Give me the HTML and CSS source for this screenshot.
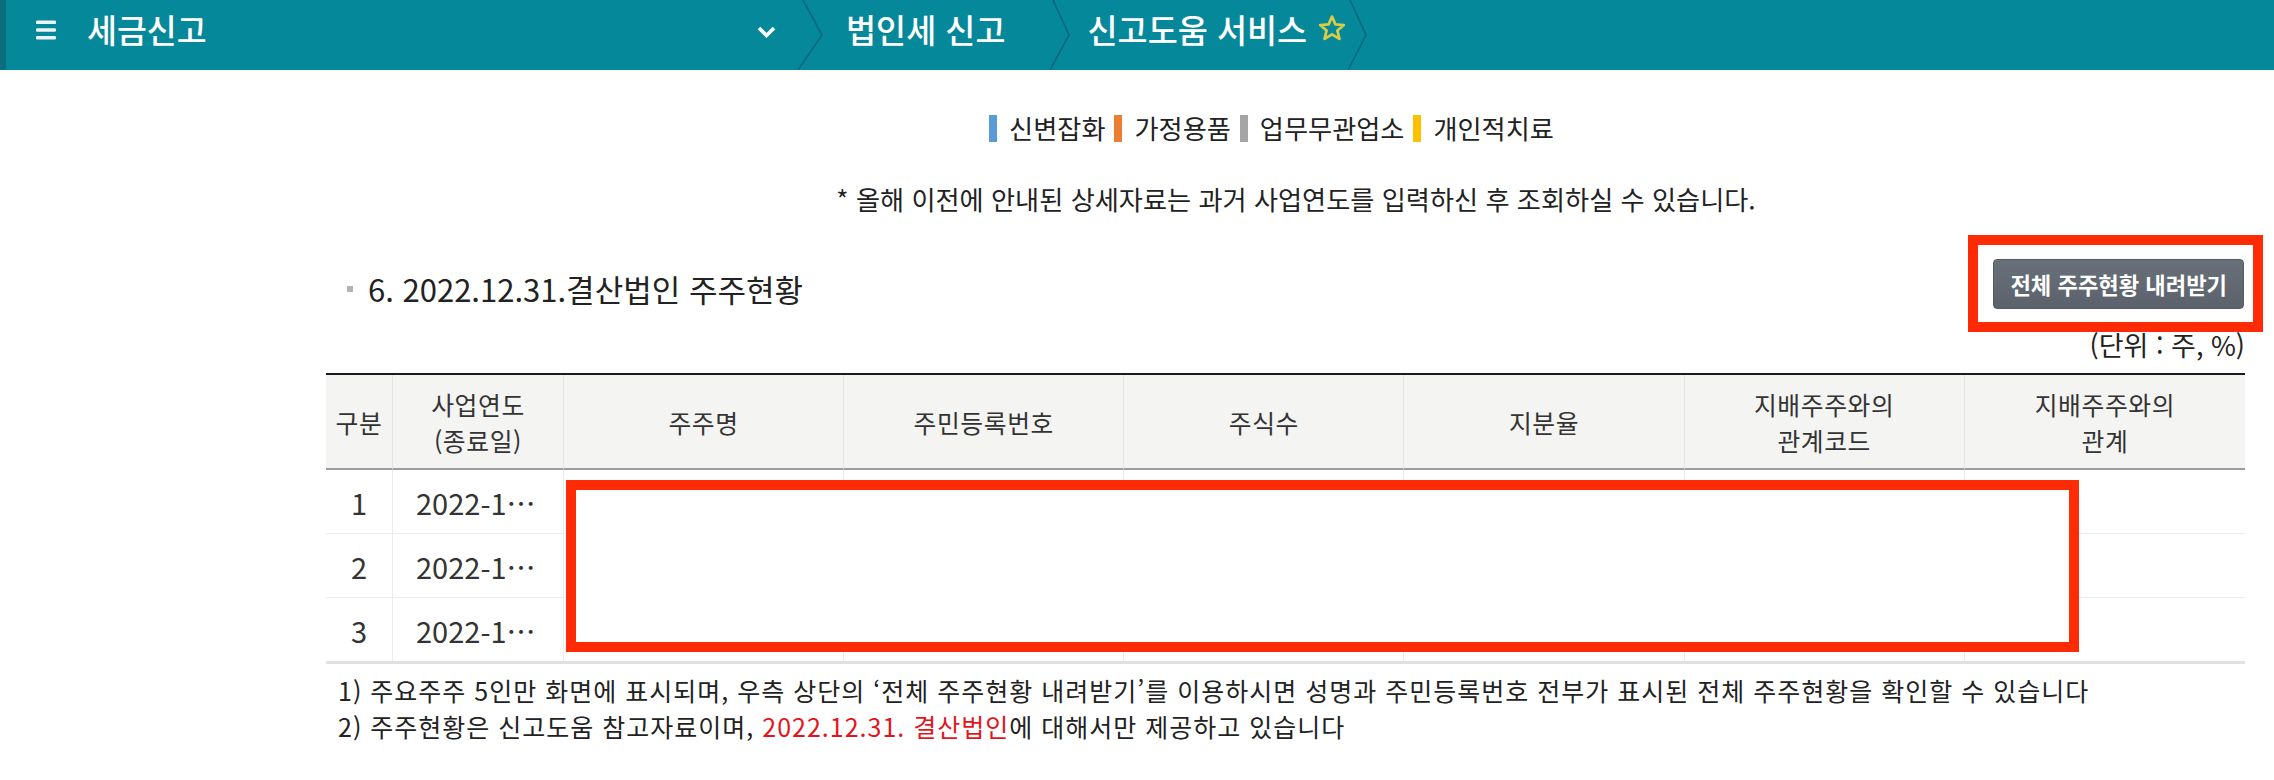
FILE: index.html
```html
<!DOCTYPE html>
<html lang="ko">
<head>
<meta charset="utf-8">
<title>세금신고 - 신고도움 서비스</title>
<link rel="stylesheet" href="styles.css">
</head>
<body>
<header class="gnb">
  <div class="brand">
    <svg class="menu-icon" width="20" height="20" viewBox="0 0 20 20" aria-hidden="true">
      <rect x="0" y="0.5" width="20" height="3.6" rx="1.2"/>
      <rect x="0" y="8.2" width="20" height="3.6" rx="1.2"/>
      <rect x="0" y="15.9" width="20" height="3.6" rx="1.2"/>
    </svg>
    <span class="brand-title">세금신고</span>
  </div>
  <svg class="caret" width="19" height="12" viewBox="0 0 19 12" aria-hidden="true">
    <polyline points="2,2 9.5,9.5 17,2" fill="none" stroke="#fff" stroke-width="3.6"/>
  </svg>
  <svg class="sep sep-first" width="26" height="70" viewBox="0 0 26 70" aria-hidden="true">
    <polyline points="5,0 24,35 0,70" fill="none" stroke="#05697a" stroke-width="1.6"/>
  </svg>
  <span class="crumb">법인세 신고</span>
  <svg class="sep sep-second" width="26" height="70" viewBox="0 0 26 70" aria-hidden="true">
    <polyline points="3,0 19,35 0,70" fill="none" stroke="#05697a" stroke-width="1.6"/>
  </svg>
  <span class="crumb crumb-current">신고도움 서비스</span>
  <svg class="star" width="28" height="28" viewBox="0 0 24 24" aria-hidden="true">
    <polygon points="12,2.2 14.9,8.9 22.2,9.4 16.6,14.1 18.4,21.3 12,17.4 5.6,21.3 7.4,14.1 1.8,9.4 9.1,8.9" fill="none" stroke="#d6cd45" stroke-width="2.3" stroke-linejoin="round"/>
  </svg>
  <svg class="sep sep-last" width="26" height="70" viewBox="0 0 26 70" aria-hidden="true">
    <polyline points="2,0 18,35 0,70" fill="none" stroke="#05697a" stroke-width="1.6"/>
  </svg>
</header>

<main class="content">
  <ul class="legend">
    <li class="legend-item"><span class="legend-bar bar-blue"></span>신변잡화</li>
    <li class="legend-item"><span class="legend-bar bar-orange"></span>가정용품</li>
    <li class="legend-item"><span class="legend-bar bar-gray"></span>업무무관업소</li>
    <li class="legend-item"><span class="legend-bar bar-yellow"></span>개인적치료</li>
  </ul>

  <p class="notice">* 올해 이전에 안내된 상세자료는 과거 사업연도를 입력하신 후 조회하실 수 있습니다.</p>

  <div class="section-head">
    <h2 class="section-title"><span class="title-bullet"></span>6. 2022.12.31.결산법인 주주현황</h2>
    <div class="btn-wrap">
      <button class="btn-download" type="button">전체 주주현황 내려받기</button>
      <span class="annot annot-btn"></span>
    </div>
  </div>

  <p class="unit">(단위 : 주, %)</p>

  <div class="table-wrap">
    <table class="grid">
      <colgroup>
        <col class="c-no">
        <col class="c-year">
        <col><col><col><col><col><col>
      </colgroup>
      <thead>
        <tr>
          <th>구분</th>
          <th>사업연도<br>(종료일)</th>
          <th>주주명</th>
          <th>주민등록번호</th>
          <th>주식수</th>
          <th>지분율</th>
          <th>지배주주와의<br>관계코드</th>
          <th class="last">지배주주와의<br>관계</th>
        </tr>
      </thead>
      <tbody>
        <tr>
          <td>1</td><td class="year" title="2022-12-31">2022-1…</td><td></td><td></td><td></td><td></td><td></td><td class="last"></td>
        </tr>
        <tr>
          <td>2</td><td class="year" title="2022-12-31">2022-1…</td><td></td><td></td><td></td><td></td><td></td><td class="last"></td>
        </tr>
        <tr class="last-row">
          <td>3</td><td class="year" title="2022-12-31">2022-1…</td><td></td><td></td><td></td><td></td><td></td><td class="last"></td>
        </tr>
      </tbody>
    </table>
    <div class="annot annot-table"></div>
  </div>

  <ul class="notes">
    <li>1) 주요주주 5인만 화면에 표시되며, 우측 상단의 ‘전체 주주현황 내려받기’를 이용하시면 성명과 주민등록번호 전부가 표시된 전체 주주현황을 확인할 수 있습니다</li>
    <li>2) 주주현황은 신고도움 참고자료이며, <span class="red">2022.12.31. 결산법인</span>에 대해서만 제공하고 있습니다</li>
  </ul>
</main>
</body>
</html>
```

FILE: styles.css
```css
* { box-sizing: border-box; }

html, body {
  margin: 0;
  padding: 0;
  background: #fff;
}

body {
  font-family: "Noto Sans CJK KR", "Noto Sans", "Liberation Sans", sans-serif;
  color: #222;
}

/* ---------- top bar ---------- */
.gnb {
  display: flex;
  align-items: center;
  height: 70px;
  background: #06889b;
  border-left: 6px solid #0a6e7d;
  padding-left: 30px;
  color: #fff;
}

.brand {
  display: flex;
  align-items: center;
  width: 721px;
  flex-shrink: 0;
}

.menu-icon {
  fill: #eef4f5;
  margin-bottom: 11px;
  flex-shrink: 0;
}

.brand-title {
  margin-left: 31px;
  font-size: 32.5px;
  line-height: 38px;
  font-weight: 500;
  margin-bottom: 13px;
  white-space: nowrap;
}

.caret {
  flex-shrink: 0;
  margin-bottom: 6px;
}

.sep {
  flex-shrink: 0;
  display: block;
}

.sep-first { margin-left: 22px; }
.sep-second { margin-left: 44px; }
.sep-last { margin-left: 2px; }

.crumb {
  margin-left: 22px;
  font-size: 32.7px;
  line-height: 38px;
  font-weight: 500;
  margin-bottom: 13px;
  white-space: nowrap;
}

.crumb-current { margin-left: 12px; }

.star {
  flex-shrink: 0;
  margin-left: 11px;
  margin-bottom: 14px;
}

/* ---------- content ---------- */
.content {
  margin: 0 29px 0 326px;
}

.legend {
  list-style: none;
  margin: 44px 0 0;
  padding: 0 28px 0 0;
  display: flex;
  justify-content: center;
  gap: 9px;
  font-size: 26.2px;
  line-height: 28px;
  color: #222;
}

.legend-item {
  display: flex;
  align-items: center;
  white-space: nowrap;
}

.legend-bar {
  display: inline-block;
  width: 8px;
  height: 27px;
  margin-right: 12px;
}

.bar-blue { background: #5b9bd5; }
.bar-orange { background: #ed7d31; }
.bar-gray { background: #a5a5a5; }
.bar-yellow { background: #ffc000; }

.notice {
  margin: 43px 0 0;
  padding-left: 21px;
  text-align: center;
  font-size: 26.2px;
  line-height: 28px;
  color: #222;
}

.section-head {
  margin-top: 46px;
  display: flex;
  justify-content: space-between;
  align-items: flex-start;
}

.section-title {
  margin: 13px 0 0;
  padding-left: 21px;
  font-size: 31px;
  line-height: 34px;
  font-weight: 400;
  color: #222;
  display: flex;
  align-items: center;
}

.title-bullet {
  display: inline-block;
  width: 6px;
  height: 6px;
  background: #b3b3b3;
  margin-right: 15px;
  flex-shrink: 0;
}

.btn-wrap {
  position: relative;
  margin-right: 1px;
}

.btn-download {
  display: block;
  height: 50px;
  padding: 0 16px;
  border: 1px solid #555b65;
  border-radius: 4px;
  background: linear-gradient(#687079, #5c626c);
  color: #fff;
  font-family: inherit;
  font-size: 22.2px;
  font-weight: 700;
  white-space: nowrap;
}

.annot {
  position: absolute;
  border: 10px solid #ff2a06;
  pointer-events: none;
}

.annot-btn {
  top: -24px;
  right: -19px;
  width: 295px;
  height: 97px;
}

.unit {
  margin: 22px 0 0;
  text-align: right;
  font-size: 27px;
  line-height: 28px;
  color: #222;
}

.table-wrap {
  position: relative;
  margin-top: 14px;
}

.grid {
  width: 100%;
  table-layout: fixed;
  border-collapse: separate;
  border-spacing: 0;
  border-top: 2px solid #1b1b1b;
  border-bottom: 3px solid #e1e1e1;
}

.c-no { width: 67px; }
.c-year { width: 171px; }

.grid th {
  height: 95px;
  padding: 0;
  background: #f4f4f2;
  border-right: 1px solid #e4e4e2;
  border-bottom: 2px solid #9c9c9c;
  font-size: 24.8px;
  letter-spacing: 0.6px;
  line-height: 36px;
  font-weight: 400;
  color: #333;
  text-align: center;
  vertical-align: middle;
}

.grid td {
  height: 64px;
  padding: 0;
  border-right: 1px solid #ececec;
  border-bottom: 1px solid #ececec;
  font-size: 29px;
  color: #333;
  text-align: center;
  vertical-align: middle;
}

.grid .last { border-right: none; }
.grid .last-row td { border-bottom: none; height: 63px; }

.grid td.year {
  padding-left: 23px;
  text-align: left;
  white-space: nowrap;
}

.annot-table {
  top: 107px;
  left: 240px;
  width: 1513px;
  height: 172px;
  background: #fff;
}

.notes {
  list-style: none;
  margin: 8px 0 0;
  padding: 0 0 0 12px;
  font-size: 25px;
  letter-spacing: 1px;
  line-height: 36.4px;
  color: #222;
}

.notes li { white-space: nowrap; }

.red { color: #e3141c; }
```
